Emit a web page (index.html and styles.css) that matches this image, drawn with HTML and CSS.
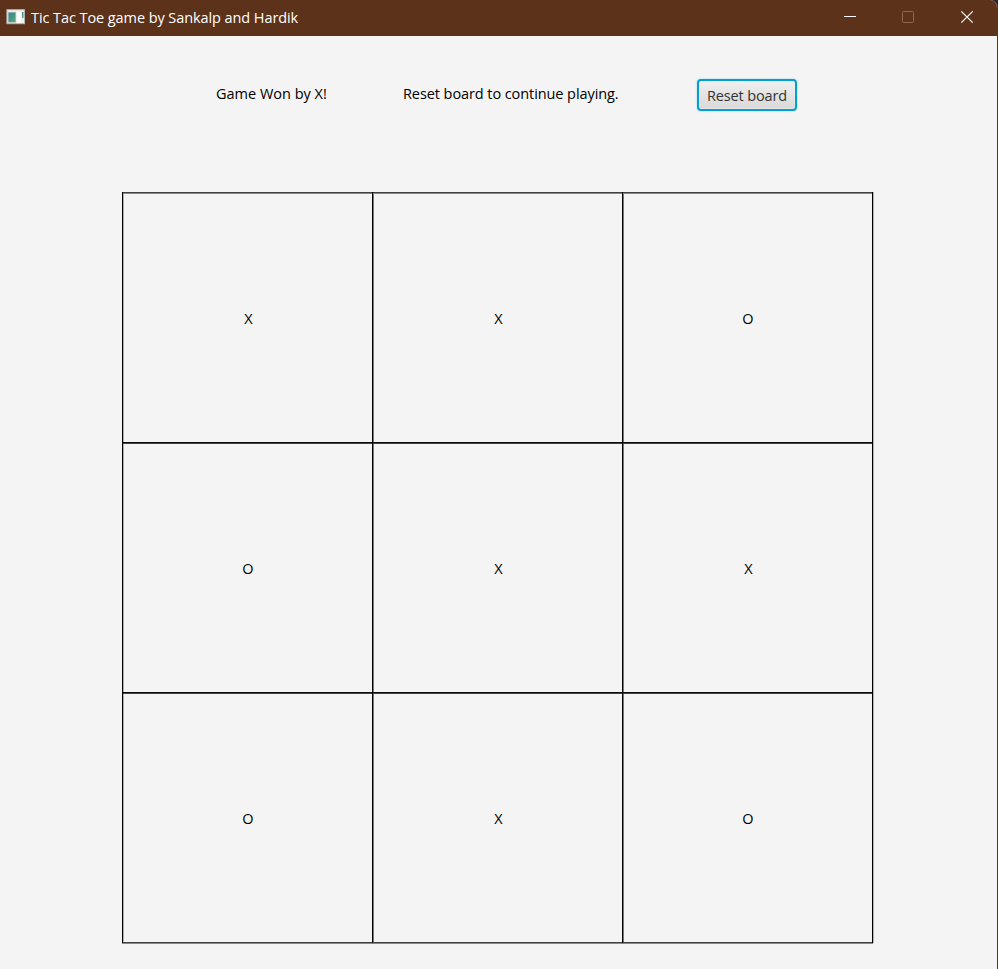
FILE: index.html
```html
<!DOCTYPE html>
<html lang="en">
<head>
<meta charset="utf-8">
<title>Tic Tac Toe game by Sankalp and Hardik</title>
<link rel="stylesheet" href="styles.css">
</head>
<body>
<div class="window">
  <header class="titlebar">
    <svg class="app-icon" width="20" height="16" viewBox="0 0 20 16">
      <defs><linearGradient id="pane" x1="0" y1="0" x2="1" y2="1"><stop offset="0" stop-color="#3f8098"/><stop offset="1" stop-color="#55a873"/></linearGradient></defs>
      <rect x="0.9" y="0.7" width="17.6" height="14" fill="#f1f1f0" stroke="#b5b3b0"/>
      <rect x="2.2" y="3.2" width="7.6" height="10" fill="url(#pane)" stroke="#a9bdc2" stroke-width=".6"/>
      <rect x="11" y="3" width="3.5" height="11" fill="#fff"/>
      <rect x="16" y="3" width="1.5" height="6" fill="url(#pane)"/>
    </svg>
    <span class="title">Tic Tac Toe game by Sankalp and Hardik</span>
    <svg class="controls" width="128" height="14" viewBox="0 0 128 14">
      <path d="M0 6.5h12" stroke="#fff" stroke-width="1"/>
      <rect x="58.5" y="1.5" width="11" height="11" rx="1" fill="none" stroke="#8b6a55"/>
      <path d="M117.3 1.3l11.4 11.4M128.7 1.3l-11.4 11.4" stroke="#fff" stroke-width="1.2"/>
    </svg>
  </header>
  <main class="content">
    <div class="status">
      <span class="result">Game Won by X!</span>
      <span class="hint">Reset board to continue playing.</span>
      <button class="reset" type="button">Reset board</button>
    </div>
    <div class="board">
      <div class="cell">X</div><div class="cell">X</div><div class="cell o">O</div>
      <div class="cell o">O</div><div class="cell">X</div><div class="cell">X</div>
      <div class="cell o">O</div><div class="cell">X</div><div class="cell o">O</div>
      <svg class="lines" width="752" height="752" viewBox="0 0 752 752">
        <g fill="#b0b0b0"><path d="M1 2h1v748H1z"/><path d="M751 0h1v751h-1z"/></g>
        <g fill="#777"><path d="M251 1h1v750h-1z"/><path d="M501 1h1v750h-1z"/></g>
        <g fill="#404040"><path d="M0 0h751v1H0z"/><path d="M0 750h751v1H0z"/></g>
        <g fill="#888"><path d="M0 1h751v1H0z"/><path d="M0 751h751v1H0z"/></g>
        <g fill="#0c0c0c"><path d="M0 250h751v1H0z"/><path d="M0 500h751v1H0z"/></g>
        <g fill="#444"><path d="M0 251h751v1H0z"/><path d="M0 501h751v1H0z"/></g>
        <g fill="#000"><path d="M0 0h1v751H0z"/><path d="M250 0h1v751h-1z"/><path d="M500 0h1v751h-1z"/><path d="M750 0h1v751h-1z"/></g>
      </svg>
    </div>
  </main>
</div>
</body>
</html>
```
FILE: styles.css
```css
* { box-sizing: border-box; }
body { margin: 0; background: #2b2725; font-family: "Open Sans", "Noto Sans", sans-serif; font-size: 14.5px; color: #000; overflow: hidden; }
.window { height: 969px; background: #f4f4f4; border-right: 1px solid #5c321a; border-radius: 0 8px 0 0; overflow: hidden; }
.titlebar { display: flex; align-items: center; height: 36px; padding: 0 25px 0 6px; background: #5c321a; color: #fff; }
.app-icon { margin-top: -2px; }
.title { margin-left: 5px; white-space: nowrap; line-height: 20px; letter-spacing: -0.08px; }
.controls { margin: -2px 0 0 auto; overflow: visible; }
.content { display: flex; flex-direction: column; }
.status { display: flex; align-items: flex-start; height: 156px; padding: 43px 0 0 216px; white-space: nowrap; }
.result, .hint { line-height: 30px; }
.result { width: 187px; letter-spacing: 0; }
.hint { width: 294px; letter-spacing: -0.08px; }
.reset { width: 100px; height: 32px; padding: 0; border: 2px solid #039ed3; border-radius: 4px; background: linear-gradient(#efefef, #d9d9d9); box-shadow: 0 0 2px #8fd0e8, inset 0 0 0 1px rgba(240, 240, 240, 0.5); color: #333; font: inherit; letter-spacing: -0.13px; white-space: nowrap; }
.board { position: relative; display: grid; grid-template-columns: repeat(3, 250px); grid-template-rows: repeat(3, 250px); width: 750px; margin-left: 122px; }
.cell { display: flex; align-items: center; justify-content: center; padding: 3px 0 0 3px; }
.o { padding-left: 2px; }
.lines { position: absolute; left: 0; top: 0; }
```
